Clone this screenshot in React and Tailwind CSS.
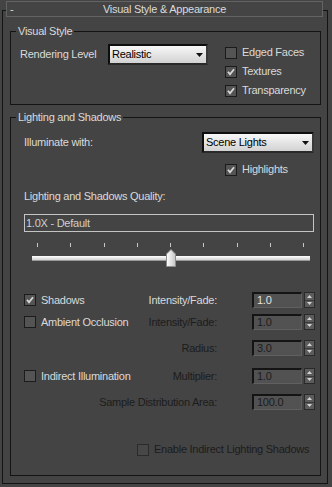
import React from 'react';

const Check = ({ checked, disabled }) => (
  <span
    className={`w-[12px] h-[12px] shrink-0 border flex items-center justify-center ${
      disabled ? 'border-[#2a2a2a] bg-[#474747]' : 'border-[#1b1b1b] bg-[#545454]'
    }`}
  >
    {checked && (
      <svg width="10" height="10" viewBox="0 0 10 10">
        <path d="M2 4.8 L4 7.3 L8 2.3" fill="none" stroke="#d8d8d8" strokeWidth="1.8" />
      </svg>
    )}
  </span>
);

const CheckRow = ({ checked, disabled, label, className = '' }) => (
  <div className={`flex items-center h-[13px] ${className}`}>
    <Check checked={checked} disabled={disabled} />
    <span className={`ml-[5px] whitespace-nowrap ${disabled ? 'text-[#1c1c1c]' : 'text-[#dadada]'}`}>{label}</span>
  </div>
);

const Dropdown = ({ value, className = '' }) => (
  <div
    className={`h-[21px] flex items-center justify-between border-2 border-[#0e0e0e] border-r-[#3a3a3a] border-b-[#2a2a2a] bg-linear-to-b from-[#f8f8f8] to-[#d2d2d2] pl-[2px] pr-[3px] text-black ${className}`}
  >
    <span>{value}</span>
    <svg width="7" height="4" viewBox="0 0 7 4">
      <path d="M0 0 H7 L3.5 4 Z" fill="#111" />
    </svg>
  </div>
);

const Spinner = ({ value, disabled }) => (
  <div className="flex items-center ml-[35px]">
    <div
      className={`w-[50px] h-[16px] bg-[#525252] border-t-2 border-l-2 border-[#141414] border-r border-b border-r-[#606060] border-b-[#606060] flex items-center pl-[3px] ${
        disabled ? 'text-[#1c1c1c]' : 'text-[#e2e2e2]'
      }`}
    >
      {value}
    </div>
    <div className="ml-[2px] w-[11px] h-[16px] flex flex-col border border-[#2a2a2a] bg-[#5c5c5c]">
      <div className="flex-1 flex items-center justify-center border-b border-[#3a3a3a]">
        <svg width="5" height="3" viewBox="0 0 5 3">
          <path d="M0 3 H5 L2.5 0 Z" fill="#d4d4d4" />
        </svg>
      </div>
      <div className="flex-1 flex items-center justify-center">
        <svg width="5" height="3" viewBox="0 0 5 3">
          <path d="M0 0 H5 L2.5 3 Z" fill="#d4d4d4" />
        </svg>
      </div>
    </div>
  </div>
);

const ParamRow = ({ check, label, value, disabled, className = '' }) => (
  <div className={`flex items-center h-[16px] ${className}`}>
    <div className="pl-[13px] w-[206px] flex items-center justify-between">
      <div>{check}</div>
      <span className={`whitespace-nowrap ${disabled ? 'text-[#1c1c1c]' : 'text-[#dadada]'}`}>{label}</span>
    </div>
    <Spinner value={value} disabled={disabled} />
  </div>
);

const GroupTitle = ({ children }) => (
  <div className="flex -mt-[8px] h-[14px]">
    <span className="ml-[5px] px-[2px] bg-[#444444] leading-[14px] text-[#dadada]">{children}</span>
  </div>
);

const ticks = [0, 1, 2, 3, 4, 5, 6, 7, 8];

export default function App() {
  return (
    <div className="w-[332px] h-[487px] bg-[#444444] pt-[10px] pl-[2px] overflow-hidden font-['Liberation_Sans',Arial,sans-serif] text-[11px] tracking-[-0.25px] text-[#dadada] leading-[13px]">
      <div className="w-[326px] h-[474px] border border-[#131313]">
        {/* rollout header */}
        <div className="-mt-[10px] ml-[3px] w-[317px] h-[16px] border border-[#636363] bg-[#444444] flex items-center relative">
          <span className="absolute left-[3px] top-[1px]">-</span>
          <span className="w-full text-center">Visual Style &amp; Appearance</span>
        </div>

        {/* Visual Style */}
        <div className="mt-[14px] ml-[7px] w-[311px] h-[74px] border border-[#141414]">
          <GroupTitle>Visual Style</GroupTitle>
          <div className="flex items-start mt-[6px]">
            <div className="flex items-center h-[21px]">
              <span className="ml-[9px] w-[88px]">Rendering Level</span>
              <Dropdown value="Realistic" className="w-[100px]" />
            </div>
            <div className="ml-[17px] mt-[2px] flex flex-col gap-[6px]">
              <CheckRow label="Edged Faces" />
              <CheckRow checked label="Textures" />
              <CheckRow checked label="Transparency" />
            </div>
          </div>
        </div>

        {/* Lighting and Shadows */}
        <div className="mt-[12px] ml-[7px] w-[311px] h-[359px] border border-[#141414]">
          <GroupTitle>Lighting and Shadows</GroupTitle>
          <div className="flex items-center mt-[8px]">
            <span className="pl-[13px] w-[191px]">Illuminate with:</span>
            <Dropdown value="Scene Lights" className="w-[112px]" />
          </div>
          <CheckRow checked label="Highlights" className="mt-[10px] pl-[214px]" />
          <div className="mt-[13px] pl-[13px] h-[14px] leading-[14px]">Lighting and Shadows Quality:</div>
          <div className="mt-[11px] ml-[13px] w-[290px] h-[18px] border border-[#c4c4c4] flex items-center pl-[1px] text-[#cfcfcf]">
            1.0X - Default
          </div>
          <div className="mt-[11px] ml-[26px] w-[267px] h-[4px] flex justify-between">
            {ticks.map((t) => (
              <span key={t} className="w-[1px] h-[4px] bg-[#c8c8c8]" />
            ))}
          </div>
          <div className="mt-[2px] ml-[21px] w-[278px] h-[18px] pt-[7px] relative">
            <div className="h-[5px] bg-linear-to-b from-[#ffffff] to-[#d0d0d0] border-b border-[#9a9a9a]" />
            <svg className="absolute left-[134px] top-0" width="10" height="18" viewBox="0 0 10 18">
              <defs>
                <linearGradient id="thumb" x1="0" y1="0" x2="1" y2="0">
                  <stop offset="0" stopColor="#ffffff" />
                  <stop offset="1" stopColor="#c4c4c4" />
                </linearGradient>
              </defs>
              <path d="M0.5 5 L5 0.5 L9.5 5 V17.5 H0.5 Z" fill="url(#thumb)" stroke="#8c8c8c" />
            </svg>
          </div>

          <ParamRow
            className="mt-[25px]"
            check={<CheckRow checked label="Shadows" />}
            label="Intensity/Fade:"
            value="1.0"
          />
          <ParamRow
            className="mt-[6px]"
            check={<CheckRow label="Ambient Occlusion" />}
            label="Intensity/Fade:"
            value="1.0"
            disabled
          />
          <ParamRow className="mt-[10px]" label="Radius:" value="3.0" disabled />
          <ParamRow
            className="mt-[12px]"
            check={<CheckRow label="Indirect Illumination" />}
            label="Multiplier:"
            value="1.0"
            disabled
          />
          <ParamRow className="mt-[10px]" label="Sample Distribution Area:" value="100.0" disabled />

          <CheckRow disabled label="Enable Indirect Lighting Shadows" className="mt-[33px] pl-[126px]" />
        </div>
      </div>
    </div>
  );
}
